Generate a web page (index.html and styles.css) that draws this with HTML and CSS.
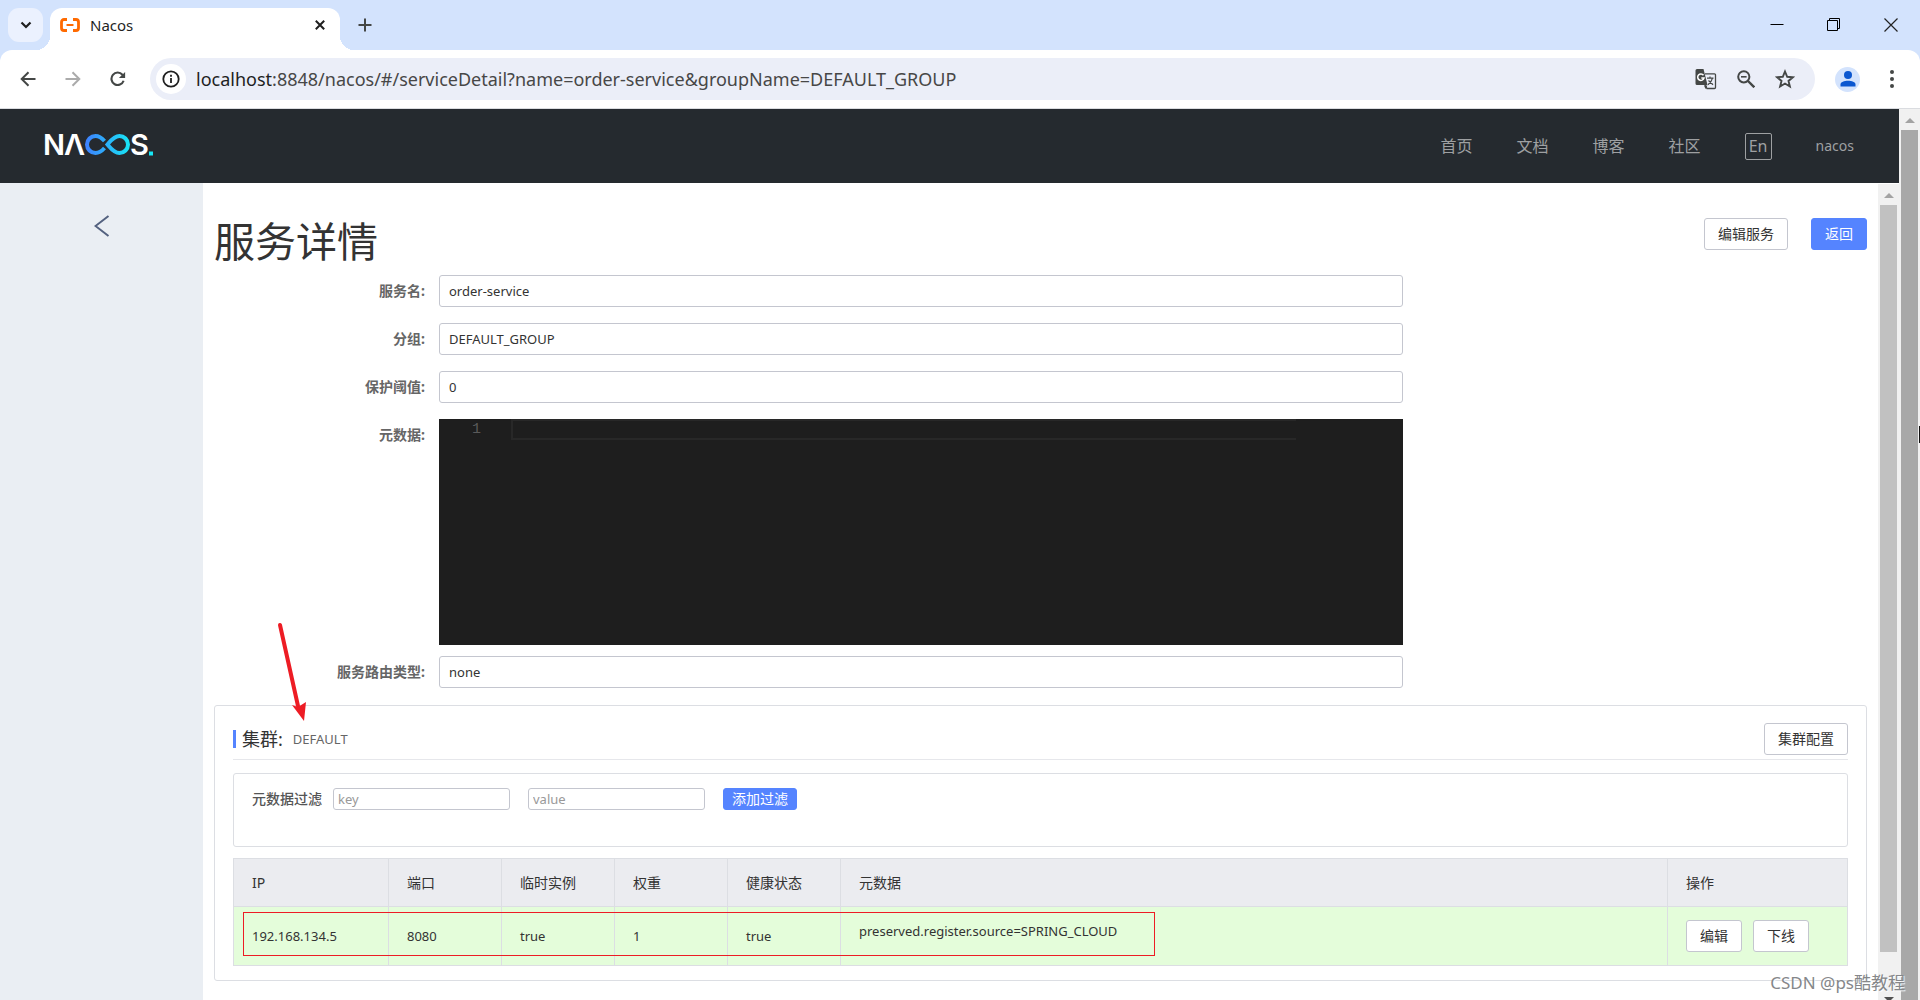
FILE: index.html
```html
<!DOCTYPE html>
<html lang="zh-CN">
<head>
<meta charset="utf-8">
<meta name="viewport" content="width=device-width, initial-scale=1">
<title>Nacos</title>
<link rel="stylesheet" href="styles.css">
</head>
<body>
<div class="tabstrip">
  <button class="tab-search" aria-label="搜索标签页"><svg width="12" height="12" viewBox="0 0 12 12"><path d="M1.5 3.5 6 8l4.500-4.500" fill="none" stroke="#1f1f1f" stroke-width="2.200"/></svg></button>
  <div class="tab">
    <svg width="20" height="14" viewBox="0 0 20 14"><path d="M7 1.500H4A2.500 2.500 0 0 0 1.500 4v6A2.500 2.500 0 0 0 4 12.500h3M13 1.500h3A2.500 2.500 0 0 1 18.500 4v6a2.500 2.500 0 0 1-2.500 2.500h-3" fill="none" stroke="#ff6a00" stroke-width="2.800"/><path d="M6.500 7h7" stroke="#ff6a00" stroke-width="2"/></svg>
    <span class="tab-title">Nacos</span>
    <button class="icon-button" aria-label="关闭标签页"><svg width="10" height="10" viewBox="0 0 10 10"><path d="m.8.8 8.400 8.400M9.200.8.8 9.200" stroke="#1f1f1f" stroke-width="2"/></svg></button>
  </div>
  <button class="icon-button new-tab" aria-label="新标签页"><svg width="14" height="14" viewBox="0 0 14 14"><path d="M7 .5v13M.5 7h13" stroke="#444746" stroke-width="2"/></svg></button>
  <div class="window-controls">
    <button class="icon-button" aria-label="最小化"><svg width="14" height="14" viewBox="0 0 14 14"><path d="M.5 6.500h13" stroke="#000"/></svg></button>
    <button class="icon-button" aria-label="还原"><svg width="14" height="14" viewBox="0 0 14 14"><path d="M.5 2.500h10v10H.5zM2.500 2.500v-2h10v10h-2" fill="none" stroke="#000"/></svg></button>
    <button class="icon-button" aria-label="关闭"><svg width="14" height="14" viewBox="0 0 14 14"><path d="m.5.5 13 13m0-13-13 13" stroke="#222" stroke-width="1.200"/></svg></button>
  </div>
</div>

<div class="toolbar">
  <button class="icon-button" aria-label="后退"><svg width="16" height="16" viewBox="0 0 16 16"><path d="M15.500 8H2M8.500 1.200 1.700 8l6.800 6.800" fill="none" stroke="#444746" stroke-width="2"/></svg></button>
  <button class="icon-button" aria-label="前进"><svg width="16" height="16" viewBox="0 0 16 16"><path d="M.5 8H14M7.500 1.200 14.300 8l-6.800 6.800" fill="none" stroke="#ababab" stroke-width="2"/></svg></button>
  <button class="icon-button" aria-label="重新加载"><svg width="16" height="16" viewBox="0 0 18 18"><path d="M15.300 11A7 7 0 1 1 14 4.200l1.500 1.600" fill="none" stroke="#444746" stroke-width="2.400"/><path d="M17 1v7h-7z" fill="#444746"/></svg></button>
  <div class="omnibox">
    <span class="site-info"><svg width="18" height="18" viewBox="0 0 18 18"><circle cx="9" cy="9" r="7.700" fill="none" stroke="#1f1f1f" stroke-width="1.800"/><path d="M9 8v5M9 4.800v2" stroke="#1f1f1f" stroke-width="1.800"/></svg></span>
    <div class="url"><b>localhost</b>:8848/nacos/#/serviceDetail?name=order-service&amp;groupName=DEFAULT_GROUP</div>
    <button class="icon-button" aria-label="翻译"><svg width="22" height="21" viewBox="0 0 22 21"><path d="M10 4.800h9.500q1 0 1 1V18.500q0 1-1 1H12L10 16" fill="none" stroke="#444746" stroke-width="1.300"/><path d="M2 0h6.500l4 16H2q-1.500 0-1.500-1.500v-13Q.5 0 2 0zM9 16.500h3.500l-2 3.500z" fill="#444746"/><path d="M8.500 6.300A3.200 3.200 0 1 0 9 9H6.300" fill="none" stroke="#fff" stroke-width="1.500"/><path d="M12 9.200h6.500M15 7.500v1.700M17.500 9.200q-1 4-4.500 6.500M13.500 11.500l4.500 4.200" fill="none" stroke="#444746" stroke-width="1.200"/></svg></button>
    <button class="icon-button" aria-label="缩放"><svg width="18" height="18" viewBox="0 0 18 18"><circle cx="6.800" cy="6.800" r="5.600" fill="none" stroke="#444746" stroke-width="2"/><path d="m11 11 6.300 6.300" stroke="#444746" stroke-width="2.400"/><path d="M4 6.800h5.600" stroke="#444746" stroke-width="1.600"/></svg></button>
    <button class="icon-button" aria-label="加入书签"><svg width="20" height="20" viewBox="0 0 20 20"><path d="m10 2.500 2.200 5.300 5.700.4-4.400 3.700 1.400 5.600L10 14.500l-4.900 3 1.400-5.600-4.400-3.700 5.700-.4z" fill="none" stroke="#444746" stroke-width="1.900"/></svg></button>
  </div>
  <button class="profile" aria-label="个人资料"><svg width="16" height="16" viewBox="0 0 16 16"><circle cx="8" cy="4" r="4" fill="#0b57d0"/><path d="M.5 15.500v-2C.5 8.500 15.500 8.500 15.500 13.500v2z" fill="#0b57d0"/></svg></button>
  <button class="icon-button" aria-label="菜单"><svg width="6" height="18" viewBox="0 0 6 18"><g fill="#444746"><circle cx="3" cy="2" r="2"/><circle cx="3" cy="9" r="2"/><circle cx="3" cy="16" r="2"/></g></svg></button>
</div>

<div class="viewport">
  <div class="page">
    <header class="site-header">
      <a class="logo" href="#" aria-label="Nacos">
        <svg width="114" height="44" viewBox="-4 -10 114 44">
          <defs><linearGradient id="ring" gradientUnits="userSpaceOnUse" x1="40" y1="0" x2="85" y2="0"><stop offset="0" stop-color="#3f7fff"/><stop offset="1" stop-color="#17e6f5"/></linearGradient></defs>
          <text class="logo-text" x="-2" y="23">N</text>
          <text class="logo-text" x="19" y="23">Λ</text>
          <path d="M59.500 16C57 18.800 54.500 21 50.500 21a8.500 8.500 0 0 1 0-17c3.500 0 6.500 2.200 9 5M62.500 12.500C65.500 9 69 4 74.500 4a8.500 8.500 0 0 1 0 17c-5.500 0-9-5-12-8.500z" fill="none" stroke="url(#ring)" stroke-width="4"/>
          <text class="logo-text" x="85" y="23">S</text>
          <path d="M104 19.500h4v4h-4z" fill="#17e6f5"/>
        </svg>
      </a>
      <nav class="site-nav">
        <a href="#">首页</a><a href="#">文档</a><a href="#">博客</a><a href="#">社区</a>
        <button class="language">En</button>
        <a class="user" href="#">nacos</a>
      </nav>
    </header>
    <div class="workspace">
      <aside class="sidebar"><a href="#" aria-label="返回"><svg width="16" height="22" viewBox="0 0 16 22"><path d="M14.500 1 1.500 11l13 10" fill="none" stroke="#53617f" stroke-width="2"/></svg></a></aside>
      <main class="content">
        <div class="title-row">
          <h1>服务详情</h1>
          <div class="actions"><button class="button">编辑服务</button><button class="button primary">返回</button></div>
        </div>
        <form class="detail-form">
          <label for="service">服务名:</label><input class="field" id="service" value="order-service" readonly>
          <label for="group">分组:</label><input class="field" id="group" value="DEFAULT_GROUP" readonly>
          <label for="threshold">保护阈值:</label><input class="field" id="threshold" value="0" readonly>
          <label for="metadata">元数据:</label>
          <div class="editor"><span class="line-number">1</span><textarea id="metadata" rows="1" readonly></textarea></div>
          <label for="selector">服务路由类型:</label><input class="field" id="selector" value="none" readonly>
        </form>
        <section class="cluster">
          <div class="cluster-head">
            <h2>集群:</h2><span class="cluster-name">DEFAULT</span>
            <button class="button">集群配置</button>
          </div>
          <form class="filter">
            <label for="key">元数据过滤</label>
            <input id="key" placeholder="key">
            <input id="value" placeholder="value" aria-label="value">
            <button class="add-filter" type="button">添加过滤</button>
          </form>
          <div class="instances">
            <table>
              <colgroup><col class="col-ip"><col class="col-small" span="4"><col><col class="col-actions"></colgroup>
              <thead><tr><th>IP</th><th>端口</th><th>临时实例</th><th>权重</th><th>健康状态</th><th>元数据</th><th>操作</th></tr></thead>
              <tbody><tr><td>192.168.134.5</td><td>8080</td><td>true</td><td>1</td><td>true</td><td class="meta">preserved.register.source=SPRING_CLOUD</td><td><div class="row-actions"><button class="button">编辑</button><button class="button">下线</button></div></td></tr></tbody>
            </table>
            <div class="highlight"></div>
          </div>
          <svg class="pointer" width="34" height="102" viewBox="0 0 34 102"><path d="m6 3 18 81" stroke="#ed1c24" stroke-width="4" stroke-linecap="round"/><path d="m30 99-12-16 6 2 8-5z" fill="#ed1c24"/></svg>
        </section>
      </main>
      <div class="scrollbar inner"><i class="arrow-up"></i><div class="thumb"></div><i class="arrow-down"></i></div>
    </div>
  </div>
  <div class="scrollbar outer"><i class="arrow-up"></i><div class="thumb"></div><div class="cursor"></div></div>
  <div class="watermark">CSDN @ps酷教程</div>
</div>
</body>
</html>
```

FILE: styles.css
```css
* { box-sizing: border-box; }

body {
  margin: 0;
  height: 100vh;
  display: flex;
  flex-direction: column;
  overflow: hidden;
  background: #d3e3fd;
  color: #333;
  font: 13px/18px "Noto Sans", "Noto Sans CJK SC", sans-serif;
}

button, input, textarea { font: inherit; color: inherit; }
svg { display: block; flex: none; }
a { color: inherit; text-decoration: none; }

.icon-button {
  display: flex;
  padding: 0;
  border: 0;
  background: none;
}

/* Browser tabs */
.tabstrip {
  display: flex;
  align-items: center;
  height: 50px;
  padding: 0 22px 0 8px;
  flex: none;
}
.tab-search {
  display: grid;
  place-items: center;
  width: 35px;
  height: 34px;
  padding: 0;
  border: 0;
  border-radius: 11px;
  background: #ebf1fe;
}
.tab {
  position: relative;
  display: flex;
  align-items: center;
  align-self: flex-end;
  width: 290px;
  height: 42px;
  margin-left: 7px;
  padding: 0 15px 8px 10px;
  border-radius: 12px 12px 0 0;
  background: #fff;
}
.tab::before, .tab::after {
  content: "";
  position: absolute;
  bottom: 0;
  width: 14px;
  height: 14px;
}
.tab::before { right: 100%; background: radial-gradient(circle at 0 0, transparent 14px, #fff 14px); }
.tab::after { left: 100%; background: radial-gradient(circle at 100% 0, transparent 14px, #fff 14px); }
.tab-title { flex: 1; margin-left: 10px; font-size: 15px; color: #1f1f1f; }
.new-tab { margin-left: 18px; }
.window-controls { display: flex; gap: 43px; margin-left: auto; }

/* Browser toolbar */
.toolbar {
  display: flex;
  align-items: center;
  flex: none;
  height: 59px;
  padding: 0 25px 0 20px;
  border-bottom: 1px solid #dadce0;
  border-radius: 12px 12px 0 0;
  background: #fff;
}
.toolbar > .icon-button { margin-right: 29px; }
.toolbar > .icon-button:last-child { margin: 0; }
.omnibox {
  display: flex;
  align-items: center;
  flex: 1;
  gap: 20px;
  height: 42px;
  margin-right: 20px;
  margin-left: -5px;
  padding: 0 20px 0 6px;
  border-radius: 21px;
  background: #ebeef8;
}
.site-info {
  display: grid;
  place-items: center;
  width: 30px;
  height: 30px;
  border-radius: 50%;
  background: #fff;
}
.url { flex: 1; margin-left: -10px; font-size: 18px; line-height: 24px; color: #474747; white-space: nowrap; }
.url b { color: #1f1f1f; font-weight: 400; }
.profile {
  display: grid;
  place-items: center;
  width: 25px;
  height: 25px;
  margin-right: 29px;
  padding: 0;
  border: 0;
  border-radius: 50%;
  background: #d3e3fd;
}

/* Page frame */
.viewport {
  position: relative;
  display: flex;
  flex: 1;
  min-height: 0;
  overflow: hidden;
  background: #fff;
}
.page { display: flex; flex-direction: column; flex: 1; min-width: 0; }
.site-header {
  display: flex;
  align-items: center;
  justify-content: space-between;
  flex: none;
  height: 74px;
  padding: 0 45px 0 41px;
  background: #252a2f;
}
.logo { margin-bottom: 4px; }
.logo-text { font: 600 29px Inter, sans-serif; fill: #fff; }
.site-nav { display: flex; align-items: center; gap: 44px; color: #9ea0a2; font-size: 16px; }
.site-nav .user { font-size: 14px; }
.language {
  width: 27px;
  height: 27px;
  padding: 0;
  border: 1px solid #9ea0a2;
  border-radius: 2px;
  background: none;
  font-size: 16px;
  line-height: 24px;
}
.workspace { display: flex; flex: 1; min-height: 0; }
.sidebar { width: 203px; padding: 32px 94px; background: #eaeef3; }
.content { flex: 1; min-width: 0; padding: 35px 11px 0; }

/* Scroll bars */
.scrollbar {
  position: relative;
  display: flex;
  flex-direction: column;
  align-items: center;
  flex: none;
  width: 21px;
  background: #f1f1f1;
}
.inner { margin-top: 1px; }
.thumb { width: 17px; flex: 1; }
.inner .thumb { flex: none; height: calc(92% - 4px); background: #c1c1c1; }
.outer .thumb { background: #a8a8a8; }
.arrow-up, .arrow-down { border: 5px solid transparent; }
.arrow-up { margin: 4px 0 7px; border-bottom-color: #a3a3a3; }
.arrow-down { margin: auto 0 -7px; border-top-color: #505050; }
.cursor { position: absolute; top: 317px; right: 0; width: 1px; height: 17px; background: #111; }

/* Controls */
.button {
  height: 32px;
  padding: 0 13px;
  border: 1px solid #c4c6cf;
  border-radius: 3px;
  background: #fff;
  font-size: 14px;
  white-space: nowrap;
}
.primary, .add-filter { border-color: #5584ff; background: #5584ff; color: #fff; }

.title-row { display: flex; justify-content: space-between; align-items: flex-start; height: 57px; }
h1 { margin: 0; font-size: 41px; font-weight: 400; line-height: 46px; }
.actions { display: flex; gap: 23px; }

.detail-form {
  display: grid;
  grid-template-columns: 211px 15fr 7fr;
  column-gap: 14px;
  row-gap: 16px;
}
.detail-form label {
  grid-column: 1;
  color: #666;
  font-size: 14px;
  font-weight: 700;
  line-height: 32px;
  text-align: right;
}
.field {
  width: 100%;
  height: 32px;
  padding: 0 9px;
  border: 1px solid #c4c6cf;
  border-radius: 3px;
}
.editor {
  display: flex;
  height: 226px;
  margin-bottom: -5px;
  background: #1e1e1e;
}
.line-number {
  width: 72px;
  padding-right: 30px;
  color: #5a5a5a;
  font: 15px/22px "Liberation Mono", monospace;
  text-align: right;
}
.editor textarea {
  flex: 1;
  height: 21px;
  margin-right: 107px;
  padding: 0;
  border: 2px solid #282828;
  border-right: 0;
  background: none;
  resize: none;
}

/* Cluster card */
.cluster {
  position: relative;
  margin-top: 17px;
  padding: 17px 18px 14px;
  border: 1px solid #dcdee3;
  border-radius: 3px;
}
.cluster-head {
  display: flex;
  align-items: center;
  padding-bottom: 4px;
  border-bottom: 1px solid #e6e7eb;
}
h2 {
  margin: 0;
  padding-left: 6px;
  border-left: 3px solid #5584ff;
  font-size: 18px;
  font-weight: 400;
  line-height: 18px;
}
.cluster-name { margin-left: 10px; color: #666; }
.cluster-head .button { margin-left: auto; }
.filter {
  display: flex;
  align-items: flex-start;
  gap: 18px;
  height: 74px;
  margin: 13px 0 11px;
  padding: 14px 18px;
  border: 1px solid #dcdee3;
  border-radius: 3px;
}
.filter label { margin-right: -7px; color: #555; font-size: 14px; font-weight: 500; line-height: 22px; }
.filter input {
  width: 177px;
  height: 22px;
  padding: 0 4px;
  border: 1px solid #c4c6cf;
  border-radius: 3px;
}
.filter input::placeholder { color: #999; }
.add-filter {
  height: 22px;
  padding: 0 8px;
  border: 1px solid #5584ff;
  border-radius: 3px;
  font-size: 14px;
  line-height: 20px;
}

.instances { position: relative; }
table { width: 100%; table-layout: fixed; border-collapse: collapse; }
.col-ip { width: 155px; }
.col-small { width: 113px; }
.col-actions { width: 180px; }
th, td { padding: 0 18px; border: 1px solid #dcdee3; text-align: left; font-weight: 400; }
th { height: 48px; background: #ebecf0; font-size: 14px; }
td { height: 59px; background: #e4fdda; }
.meta { padding-bottom: 10px; }
.row-actions { display: flex; gap: 11px; }

/* Annotations over the page */
.highlight {
  position: absolute;
  top: 54px;
  left: 10px;
  width: 912px;
  height: 44px;
  border: 1px solid #ed1c24;
}
.pointer { position: absolute; top: -84px; left: 59px; }
.watermark {
  position: absolute;
  right: 15px;
  bottom: 5px;
  color: #85878a;
  font-size: 17px;
  line-height: 24px;
  text-shadow: 1px 1px 1px #fff;
}
```
